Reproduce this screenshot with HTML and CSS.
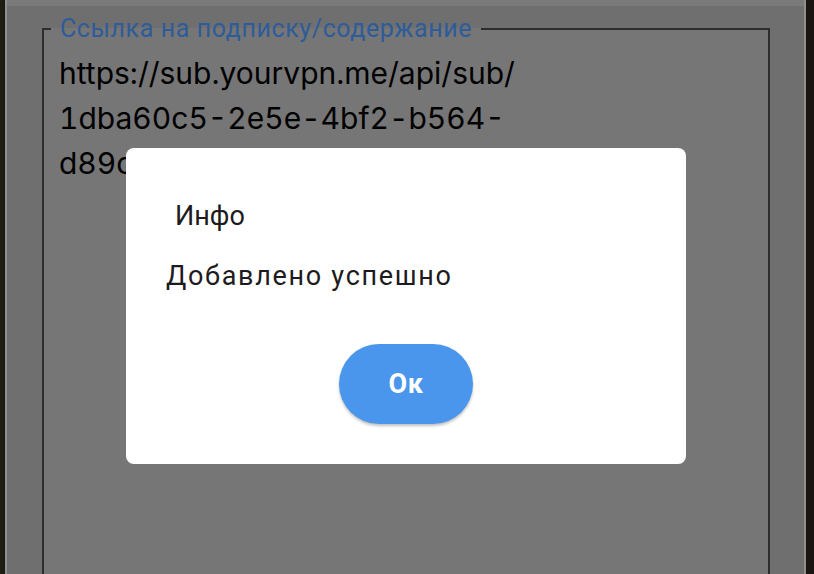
FILE: index.html
```html
<!DOCTYPE html>
<html lang="ru">

<head>
  <meta charset="UTF-8">
  <meta name="viewport" content="width=device-width, initial-scale=1.0">
  <title>Подписка</title>
  <link rel="stylesheet" href="styles.css">
</head>

<body>
  <div class="window">
    <div class="titlebar"></div>
    <div class="content">
      <fieldset class="sub-box">
        <legend>Ссылка на подписку/содержание</legend>
        <div class="sub-text">https://sub.yourvpn.me/api/sub/<br>1dba60c5-2e5e-4bf2-b564-<br>d89c4e7a1f23</div>
      </fieldset>
    </div>
  </div>

  <div class="backdrop">
    <div class="dialog">
      <div class="dialog-title">Инфо</div>
      <div class="dialog-body">Добавлено успешно</div>
      <div class="dialog-actions">
        <button class="ok-btn">Ок</button>
      </div>
    </div>
  </div>
</body>

</html>
```

FILE: styles.css
```css
* {
  margin: 0;
  padding: 0;
  box-sizing: border-box;
}

body {
  height: 100vh;
  overflow: hidden;
  display: flex;
  background: linear-gradient(to right, #35331f 0, #2f2d22 5px, #2f2d22 806px, #2c241f 806px);
  font-family: 'Roboto', sans-serif;
}

.window {
  width: 801px;
  margin-left: 5px;
  height: 100%;
  display: flex;
  flex-direction: column;
  border-left: 2px solid #eeeeee;
  border-right: 2px solid #eeeeee;
}

.titlebar {
  flex-shrink: 0;
  height: 6px;
  background: #cbcbcb;
}

.content {
  flex: 1;
  background: #b9b9bb;
  padding: 9px 34px 0 35px;
}

.sub-box {
  height: 620px;
  background: #c5c5c5;
  border: 2px solid #484b4e;
  padding: 0 7px;
}

.sub-box legend {
  padding: 0 9px;
  font-size: 25px;
  line-height: 28px;
  letter-spacing: 0.6px;
  color: #4d99fd;
}

.sub-text {
  padding: 8px 0 0 8px;
  font-family: 'Inter', sans-serif;
  font-size: 30px;
  line-height: 45px;
  font-variant-numeric: tabular-nums;
  color: #000;
}

.backdrop {
  position: fixed;
  inset: 0;
  background: rgba(0, 0, 0, 0.4);
  display: flex;
  justify-content: center;
  align-items: flex-start;
  padding: 148px 2px 0 0;
}

.dialog {
  width: 560px;
  height: 316px;
  background: #fff;
  border-radius: 8px;
  padding: 50px 40px 40px;
  color: #1d1b20;
  font-size: 27px;
  line-height: 36px;
}

.dialog-title {
  padding-left: 9px;
}

.dialog-body {
  margin-top: 24px;
  letter-spacing: 1.7px;
}

.dialog-actions {
  display: flex;
  justify-content: center;
  margin-top: 50px;
}

.ok-btn {
  width: 134px;
  height: 80px;
  border: none;
  border-radius: 40px;
  background: #4a96ec;
  color: #fff;
  font-family: 'Roboto', sans-serif;
  font-size: 27px;
  font-weight: bold;
  letter-spacing: 0.5px;
  box-shadow: 0 2px 3px rgba(0, 0, 0, 0.25);
  cursor: pointer;
}
```
